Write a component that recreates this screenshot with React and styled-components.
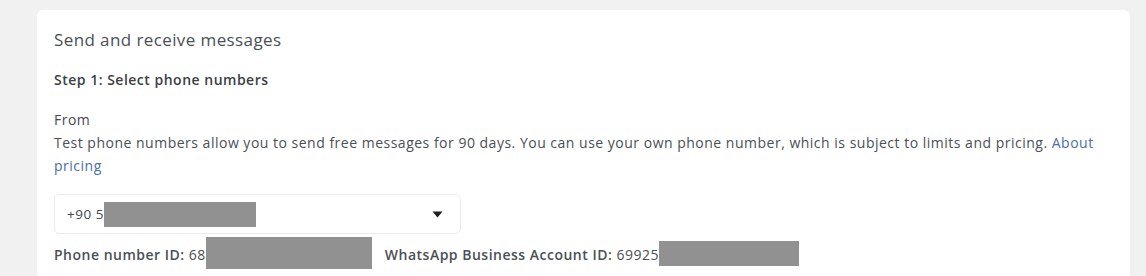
import React from "react";
import styled, { createGlobalStyle } from "styled-components";

const GlobalStyle = createGlobalStyle`
  html, body {
    margin: 0;
    padding: 0;
    background: #f1f1f1;
    font-family: "Open Sans", Roboto, "Liberation Sans", Arial, sans-serif;
    overflow: hidden;
  }
`;

const Page = styled.div`
  width: 1146px;
  height: 276px;
  padding: 10px 16px 0 37px;
  box-sizing: border-box;
  background: #f1f1f1;
`;

const Card = styled.div`
  width: 1093px;
  height: 300px;
  background: #ffffff;
  border-radius: 6px;
  padding: 20px 17px 0 17px;
  box-sizing: border-box;
  color: #444950;
  letter-spacing: 0.5px;
`;

const Title = styled.div`
  font-size: 17px;
  letter-spacing: 0.4px;
  line-height: 20px;
  color: #4b4f56;
  margin-bottom: 22px;
`;

const Step = styled.div`
  font-size: 14px;
  font-weight: 600;
  line-height: 16px;
  color: #3c3f44;
  margin-bottom: 24px;
`;

const Label = styled.div`
  font-size: 14px;
  line-height: 16px;
  color: #444950;
`;

const Desc = styled.div`
  font-size: 14px;
  line-height: 23px;
  color: #4b4f56;
  margin-top: 3px;
  padding-right: 10px;
`;

const Link = styled.a`
  color: #4a6ead;
  text-decoration: none;
`;

const Select = styled.div`
  margin-top: 17px;
  width: 407px;
  height: 40px;
  border: 1px solid #ececec;
  border-radius: 5px;
  box-sizing: border-box;
  display: flex;
  align-items: center;
  padding: 0 17px 0 12px;
  font-size: 13.5px;
  color: #444950;
`;

const Value = styled.span`
  flex: 1;
  display: flex;
  align-items: center;
`;

const Redact = styled.span`
  display: inline-block;
  background: #919191;
  width: ${(p) => p.w}px;
  height: ${(p) => p.h}px;
  margin-top: ${(p) => p.t || 0}px;
`;

const IdRow = styled.div`
  display: flex;
  align-items: flex-start;
  height: 40px;
  font-size: 14px;
  color: #4b4f56;
`;

const IdItem = styled.div`
  display: flex;
  align-items: flex-start;
  margin-right: ${(p) => p.gap || 0}px;
`;

const IdText = styled.span`
  margin-top: 13px;
  line-height: 16px;
  font-weight: 600;
  white-space: nowrap;
`;

const Num = styled.span`
  font-weight: 400;
`;

const Caret = () => (
  <svg width="11" height="7" viewBox="0 0 11 7">
    <path d="M0.5 0.5 L10.5 0.5 L5.5 6.5 Z" fill="#1c1e21" />
  </svg>
);

export default function App() {
  return (
    <>
      <GlobalStyle />
      <Page>
        <Card>
          <Title>Send and receive messages</Title>
          <Step>Step 1: Select phone numbers</Step>
          <Label>From</Label>
          <Desc>
            Test phone numbers allow you to send free messages for 90 days. You can use your own phone
            number, which is subject to limits and pricing. <Link href="#">About pricing</Link>
          </Desc>
          <Select>
            <Value>
              +90 5
              <Redact w={152} h={25} />
            </Value>
            <Caret />
          </Select>
          <IdRow>
            <IdItem gap={13}>
              <IdText>
                Phone number ID: <Num>68</Num>
              </IdText>
              <Redact w={166} h={32} t={3} />
            </IdItem>
            <IdItem>
              <IdText>
                WhatsApp Business Account ID: <Num>69925</Num>
              </IdText>
              <Redact w={140} h={25} t={7} />
            </IdItem>
          </IdRow>
        </Card>
      </Page>
    </>
  );
}
